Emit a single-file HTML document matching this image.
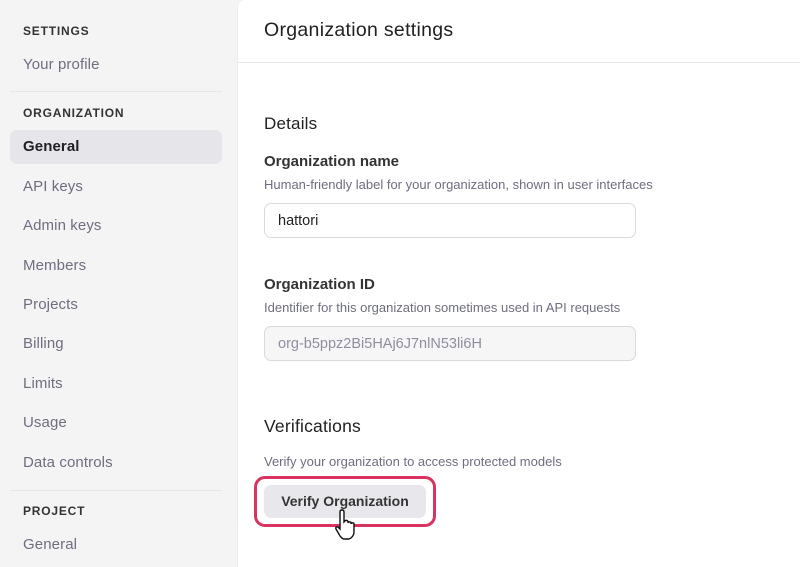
<!DOCTYPE html>
<html><head><style>
*{margin:0;padding:0;box-sizing:border-box}
body{width:800px;height:567px;overflow:hidden;background:#f4f4f5;font-family:"Liberation Sans",sans-serif;position:relative;color:#202123}
.side{position:absolute;left:0;top:0;width:236px;height:567px}
.h{position:absolute;left:23px;font-size:12px;font-weight:bold;letter-spacing:.8px;color:#333}
.i{position:absolute;left:23px;font-size:15px;color:#6e6e80;letter-spacing:.1px}
.sel{position:absolute;left:10px;top:130px;width:212px;height:34px;background:#e5e5ea;border-radius:7px}
.hr{position:absolute;left:10px;width:212px;height:1px;background:#e6e6e8}
.main{position:absolute;left:237px;top:0;width:563px;height:567px;background:#fff;border-top-left-radius:8px;border-left:1px solid #ececec}
.top{position:absolute;left:0;top:0;width:563px;height:63px;border-bottom:1px solid #e8e8e8}
.t{position:absolute;left:26px;white-space:nowrap}
.inp{position:absolute;left:26px;width:372px;height:35px;border:1px solid #d9d9e0;border-radius:7px;font-size:14.5px;padding:9px 13px}
.s{font-size:13px;color:#6e6e80}
</style></head><body>
<div class="side">
<div class="h" style="top:24px">SETTINGS</div>
<div class="i" style="top:56px">Your profile</div>
<div class="hr" style="top:91px"></div>
<div class="h" style="top:106px">ORGANIZATION</div>
<div class="sel"></div>
<div class="i" style="top:138px;color:#202123;font-weight:bold">General</div>
<div class="i" style="top:178px">API keys</div>
<div class="i" style="top:217px">Admin keys</div>
<div class="i" style="top:257px">Members</div>
<div class="i" style="top:296px">Projects</div>
<div class="i" style="top:335px">Billing</div>
<div class="i" style="top:375px">Limits</div>
<div class="i" style="top:414px">Usage</div>
<div class="i" style="top:454px">Data controls</div>
<div class="hr" style="top:490px"></div>
<div class="h" style="top:504px">PROJECT</div>
<div class="i" style="top:536px">General</div>
</div>
<div class="main">
<div class="top"><div class="t" style="top:19px;font-size:19.5px;letter-spacing:.3px;color:#202123">Organization settings</div></div>
<div class="t" style="top:114px;font-size:17px;letter-spacing:.2px">Details</div>
<div class="t" style="top:153px;font-size:15px;font-weight:bold;color:#333">Organization name</div>
<div class="t s" style="top:177px">Human-friendly label for your organization, shown in user interfaces</div>
<div class="inp" style="top:203px">hattori</div>
<div class="t" style="top:276px;font-size:15px;font-weight:bold;color:#333">Organization ID</div>
<div class="t s" style="top:300px">Identifier for this organization sometimes used in API requests</div>
<div class="inp" style="top:326px;background:#f6f6f7;color:#8e8ea0">org-b5ppz2Bi5HAj6J7nlN53li6H</div>
<div class="t" style="top:416px;font-size:17.5px;letter-spacing:.2px">Verifications</div>
<div class="t s" style="top:454px">Verify your organization to access protected models</div>
<div style="position:absolute;left:16px;top:476px;width:182px;height:51px;border:3px solid #d8345f;border-radius:11px"></div>
<div style="position:absolute;left:26px;top:485px;width:162px;height:33px;background:#e8e8ec;border-radius:7px;font-size:14px;font-weight:bold;text-align:center;line-height:33px;color:#333">Verify Organization</div>
<svg style="position:absolute;left:96px;top:508px" width="26" height="34" viewBox="0 0 26 34"><path d="M8 2c1.5 0 2 1 2 2v10l1-1c0-1 3-1 3 1v1c0-1.5 3-1.5 3 0v1c0-1.5 3-1.5 3 0v8c0 3-2 6-5 7H10c-2 0-3-2-4-3L2 21c-1-1.5 1-3 2.5-1.5L6 21V4c0-1 .5-2 2-2z" fill="#fff" stroke="#111" stroke-width="1.4"/></svg>
</div>
</body></html>
